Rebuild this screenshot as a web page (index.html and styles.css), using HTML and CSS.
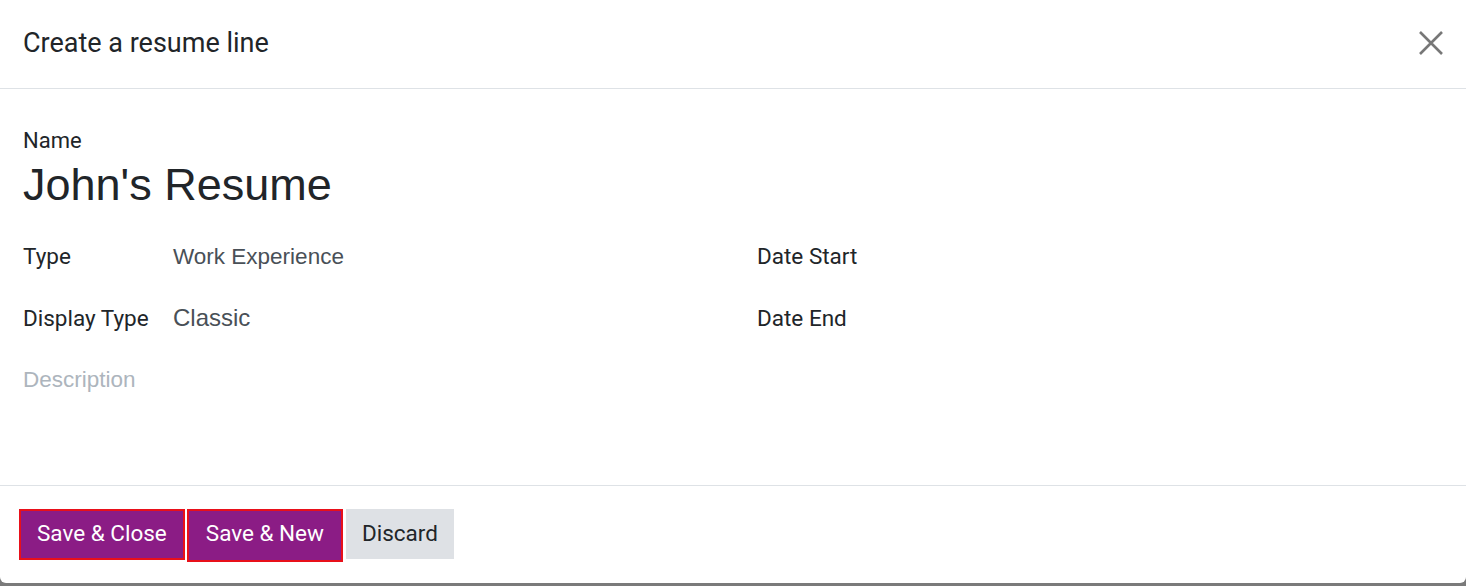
FILE: index.html
```html
<!DOCTYPE html>
<html>
<head>
<meta charset="utf-8">
<link rel="stylesheet" href="styles.css">
</head>
<body>
<div class="dialog">
  <header class="dlg-header">
    <h4 class="dlg-title">Create a resume line</h4>
    <button class="btn-close" aria-label="Close">
      <svg width="26" height="26" viewBox="0 0 26 26"><path d="M2 2 L24 24 M24 2 L2 24" stroke="#777" stroke-width="2.6" fill="none"/></svg>
    </button>
  </header>
  <main class="dlg-body">
    <div class="name-block">
      <label class="name-label">Name</label>
      <div class="name-value">John's Resume</div>
    </div>
    <div class="groups">
      <div class="group">
        <div class="row"><span class="lbl">Type</span><span class="val val-sm">Work Experience</span></div>
        <div class="row"><span class="lbl">Display Type</span><span class="val">Classic</span></div>
      </div>
      <div class="group">
        <div class="row"><span class="lbl">Date Start</span><span class="val"></span></div>
        <div class="row"><span class="lbl">Date End</span><span class="val"></span></div>
      </div>
    </div>
    <div class="desc">Description</div>
  </main>
  <footer class="dlg-footer">
    <button class="btn btn-primary outlined">Save &amp; Close</button>
    <button class="btn btn-primary outlined tall">Save &amp; New</button>
    <button class="btn btn-secondary">Discard</button>
  </footer>
</div>
</body>
</html>
```
FILE: styles.css
```css
html, body {
  margin: 0;
  padding: 0;
}
body {
  background: #7a7a7a;
  width: 1466px;
  height: 586px;
  overflow: hidden;
  font-family: Roboto, "Noto Sans", sans-serif;
  color: #212529;
}
.dialog {
  background: #fff;
  height: 583px;
  border-radius: 0 0 6px 6px;
  display: flex;
  flex-direction: column;
}
.dlg-header {
  height: 89px;
  box-sizing: border-box;
  border-bottom: 1px solid #dee2e6;
  display: flex;
  align-items: center;
  justify-content: space-between;
  padding: 0 22px 2px 23px;
}
.dlg-title {
  margin: 0;
  font-weight: 400;
  font-size: 27px;
  color: #212529;
}
.btn-close {
  border: 0;
  background: none;
  padding: 0;
  width: 26px;
  height: 26px;
  display: flex;
}
.dlg-body {
  flex: 1;
  padding: 0 23px;
}
.name-block {
  padding-top: 39px;
}
.name-label {
  display: block;
  font-size: 22px;
  line-height: 26px;
}
.name-value {
  font-family: "Liberation Sans", Arial, sans-serif;
  font-size: 45px;
  line-height: 50px;
  margin-top: 6px;
}
.groups {
  display: grid;
  grid-template-columns: 734px 1fr;
  margin-top: 15px;
}
.row {
  display: flex;
  align-items: center;
  height: 62px;
}
.lbl {
  width: 150px;
  font-size: 22.5px;
}
.val {
  font-family: "Liberation Sans", Arial, sans-serif;
  font-size: 24px;
  color: #495057;
}
.val-sm {
  font-size: 22.5px;
  padding-top: 2px;
}
.desc {
  font-family: "Liberation Sans", Arial, sans-serif;
  font-size: 22.5px;
  color: #adb5bd;
  height: 62px;
  line-height: 62px;
}
.dlg-footer {
  height: 98px;
  box-sizing: border-box;
  border-top: 1px solid #dee2e6;
  display: flex;
  align-items: flex-start;
  padding: 23px 0 0 19px;
  gap: 2px;
}
.btn {
  font-family: Roboto, "Noto Sans", sans-serif;
  font-size: 22.5px;
  border: 0;
  height: 51px;
  padding: 0 16px 3px;
  margin: 0;
}
.btn-primary {
  background: #8b1c85;
  color: #fff;
}
.outlined {
  border: 2px solid #e8101a;
}
.tall {
  height: 53px;
  padding: 0 17px 5px;
}
.btn-secondary {
  background: #dee1e5;
  color: #212529;
  margin-left: 1px;
  height: 50px;
  padding: 0 16px 2px;
}
```
